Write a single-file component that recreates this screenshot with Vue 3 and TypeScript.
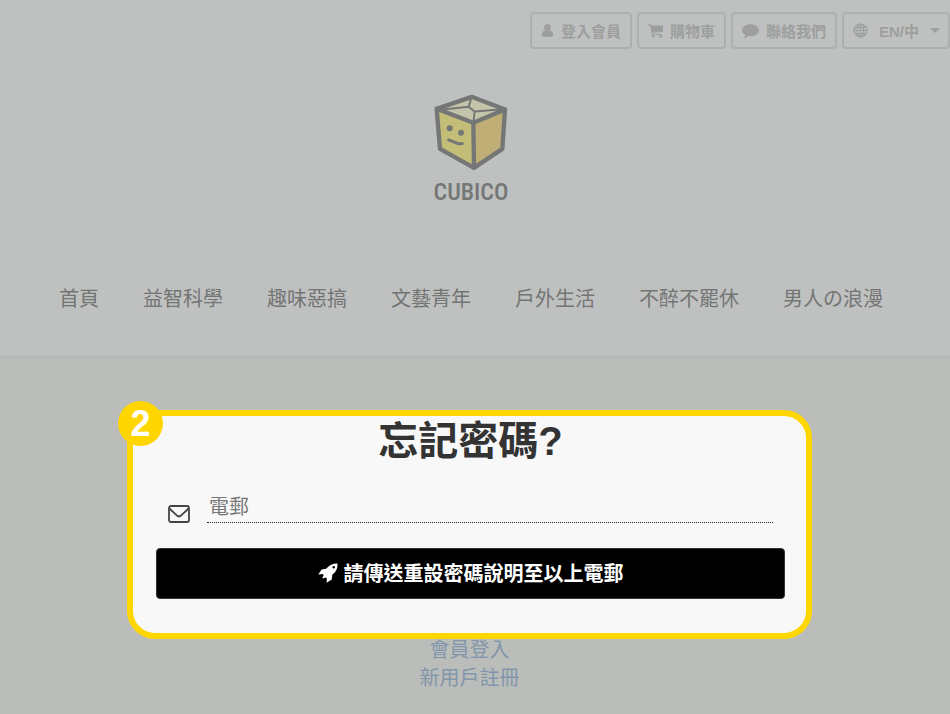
<script setup lang="ts">
import { ref } from 'vue'

const categories: string[] = ['首頁', '益智科學', '趣味惡搞', '文藝青年', '戶外生活', '不醉不罷休', '男人の浪漫']
const email = ref('')
</script>

<template>
  <div class="page">
    <header class="header">
      <div class="tools">
        <button class="tool" type="button">
          <svg class="icon person" viewBox="0 0 16 16" aria-hidden="true">
            <path d="M8 0c2.500 0 4.200 1.900 4.200 4.400 0 1.500-.5 2.700-1.300 3.500 2.900.4 4.100 2.400 4.100 5.200 0 1.700-.9 2.500-2.300 2.500H3.300C1.900 15.600 1 14.800 1 13.100c0-2.800 1.200-4.800 4.100-5.200-.8-.8-1.300-2-1.300-3.500C3.800 1.900 5.500 0 8 0z" />
          </svg>
          <span>登入會員</span>
        </button>
        <button class="tool cart" type="button">
          <svg class="icon" viewBox="0 0 16 16" aria-hidden="true">
            <path d="M0 1.200h3.100l.4 1.500H16v6.600L5.100 10.600l.2 1h9.300v1.300H4.200L2.300 2.600H0z" />
            <circle cx="5.500" cy="14.200" r="1.500" />
            <circle cx="13.500" cy="14.200" r="1.500" />
          </svg>
          <span>購物車</span>
        </button>
        <button class="tool" type="button">
          <svg class="icon chat" viewBox="0 0 16 16" aria-hidden="true">
            <path d="M8 2c4.400 0 8 2.500 8 5.700s-3.600 5.700-8 5.700c-.7 0-1.400-.1-2-.2-1.200 1.200-2.700 1.800-4.400 2 .8-.8 1.300-1.800 1.400-3C1.200 11.200 0 9.500 0 7.700 0 4.500 3.600 2 8 2z" />
          </svg>
          <span>聯絡我們</span>
        </button>
        <button class="tool language" type="button">
          <svg class="icon globe" viewBox="0 0 16 16" aria-hidden="true">
            <circle cx="8" cy="8" r="6.800" />
            <ellipse cx="8" cy="8" rx="3.400" ry="6.800" />
            <path d="M8 1.200v13.600M1.200 8h13.600M2.500 4.600h11M2.500 11.400h11" />
          </svg>
          <span>EN/中</span>
          <i class="caret"></i>
        </button>
      </div>

      <a class="brand" href="#">
        <svg class="cube" viewBox="0 0 222 230" aria-hidden="true">
          <path class="lid" d="M113 8 213 46 118 86 8 44z" />
          <path class="front" d="M8 44 118 86 120 221 18 164z" />
          <path class="side" d="M213 46 118 86 120 221 205 164z" />
          <path class="fold" d="M113 8 104 38 122 52 118 86M26 46 104 38M196 46 122 52" />
          <path class="edge" d="M113 8 213 46 205 164 120 221 18 164 8 44zM8 44 118 86 213 46M118 86 120 221" />
          <circle class="eye" cx="47" cy="102" r="9" />
          <circle class="eye" cx="81" cy="116" r="9" />
          <path class="mouth" d="M44 137 74 149 85 148" />
        </svg>
        <span class="name">CUBICO</span>
      </a>

      <nav class="nav">
        <a v-for="item in categories" :key="item" href="#">{{ item }}</a>
      </nav>
    </header>

    <main class="main">
      <section class="card">
        <span class="step">2</span>
        <h1>忘記密碼?</h1>
        <form @submit.prevent>
          <div class="field">
            <label for="email" aria-label="電郵">
              <svg class="mail" viewBox="0 0 22 18" aria-hidden="true">
                <rect x="1" y="1" width="20" height="16" rx="2" />
                <path d="M1.500 3.500C4 6 7 8.600 9.400 10.800q1.600 1.300 3.200 0C15 8.600 18 6 20.500 3.500" />
              </svg>
            </label>
            <input id="email" v-model="email" type="email" placeholder="電郵" />
          </div>
          <button class="submit" type="submit">
            <svg class="rocket" viewBox="0 0 20 20" aria-hidden="true">
              <path fill-rule="evenodd" d="M19.500.5c-5 0-8.300 1.800-11.300 5.200L3.600 6.400.3 11.400l4.300-.3 1 1.400-1.300 2.300.8.800 2.300-1.200 1.500 1.100-.3 4.200 5.200-3.300.5-4.700c3.900-3 5.400-6.200 5.200-11.200zM15.700 3a1.300 1.300 0 1 1 0 2.600 1.300 1.300 0 0 1 0-2.600z" />
            </svg>
            <span>請傳送重設密碼說明至以上電郵</span>
          </button>
        </form>
      </section>
      <div class="links">
        <a href="#">會員登入</a>
        <a href="#">新用戶註冊</a>
      </div>
    </main>
  </div>
</template>

<style>
body {
  background: #bbbdba;
}
</style>

<style scoped>
.page {
  min-height: 100vh;
  overflow: hidden;
  background: #bbbdba;
  font-family: "Liberation Sans", "Noto Sans CJK TC", sans-serif;
  font-size: 20px;
  line-height: 28px;
}

a {
  text-decoration: none;
}

button {
  font-family: inherit;
  cursor: pointer;
}

.header {
  display: flex;
  flex-direction: column;
  align-items: center;
  background: #bfc1c0;
  border-bottom: 2px solid #b6b8b7;
}

.tools {
  align-self: flex-end;
  display: flex;
  gap: 5px;
  padding-top: 12px;
}

.tool {
  display: flex;
  align-items: center;
  gap: 7px;
  height: 37px;
  padding: 0 9px;
  border: 2px solid #aeb0af;
  border-radius: 4px;
  background: transparent;
  color: #9d9f9e;
  font-size: 15px;
  font-weight: 700;
}

.language {
  gap: 11px;
  padding-right: 8px;
}

.icon {
  width: 15px;
  height: 15px;
  fill: currentColor;
}

.person {
  width: 13px;
}

.chat {
  width: 17px;
  height: 17px;
}

.globe {
  fill: none;
  stroke: currentColor;
  stroke-width: 1.3;
}

.caret {
  border: 5px solid transparent;
  border-top-color: currentColor;
  border-bottom: 0;
}

.brand {
  display: flex;
  flex-direction: column;
  align-items: center;
  margin: 45px 8px 0 0;
  color: #747775;
}

.cube {
  width: 74px;
  height: 77px;
}

.cube path {
  stroke: #747775;
  stroke-linejoin: round;
  stroke-linecap: round;
}

.cube .lid {
  fill: #c4c4ab;
  stroke: none;
}

.cube .front {
  fill: #c4bd77;
  stroke: none;
}

.cube .side {
  fill: #bfae76;
  stroke: none;
}

.cube .fold {
  fill: none;
  stroke-width: 6;
}

.cube .edge {
  fill: none;
  stroke-width: 13;
}

.cube .mouth {
  fill: none;
  stroke-width: 9;
}

.eye {
  fill: #747775;
}

.name {
  padding-top: 7px;
  font-family: "Roboto Condensed", "Open Sans Condensed", "Liberation Sans Narrow", Roboto, sans-serif;
  font-size: 24px;
  font-weight: 500;
}

.nav {
  display: flex;
  gap: 44px;
  margin: 79px 8px 43px 0;
  white-space: nowrap;
}

.nav a {
  color: #737574;
}

.main {
  padding: 52px 138px 0 127px;
}

.card {
  position: relative;
  padding: 0 21px 34px 23px;
  border: 6px solid #ffd600;
  border-radius: 28px;
  background: #f8f8f8;
}

.step {
  position: absolute;
  top: -15px;
  left: -15px;
  width: 45px;
  height: 45px;
  border-radius: 50%;
  background: #ffd600;
  color: #fff;
  font-size: 36px;
  font-weight: 700;
  line-height: 45px;
  text-align: center;
}

h1 {
  margin: 0;
  color: #333;
  font-size: 40px;
  font-weight: 700;
  line-height: 50px;
  text-align: center;
}

.field {
  display: flex;
  align-items: flex-end;
  gap: 17px;
  margin: 27px 12px 25px;
}

.field label {
  display: flex;
}

.mail {
  width: 22px;
  height: 18px;
  fill: none;
  stroke: #444;
  stroke-width: 1.8;
}

.field input {
  flex: 1;
  min-width: 0;
  height: 29px;
  padding: 0 2px;
  border: 0;
  border-bottom: 1px dotted #222;
  border-radius: 0;
  outline: 0;
  background: transparent;
  color: #333;
  font-family: inherit;
  font-size: 20px;
}

.field input::placeholder {
  color: #777;
  opacity: 1;
}

.submit {
  display: flex;
  align-items: center;
  justify-content: center;
  gap: 6px;
  width: 100%;
  height: 51px;
  padding: 0 0 2px;
  border: 1px solid #333;
  border-radius: 4px;
  background: #000;
  color: #fff;
  font-size: 20px;
  font-weight: 700;
}

.rocket {
  width: 20px;
  height: 20px;
  fill: currentColor;
}

.links {
  display: flex;
  flex-direction: column;
  align-items: center;
  margin-top: -3px;
}

.links a {
  color: #8196aa;
}
</style>
